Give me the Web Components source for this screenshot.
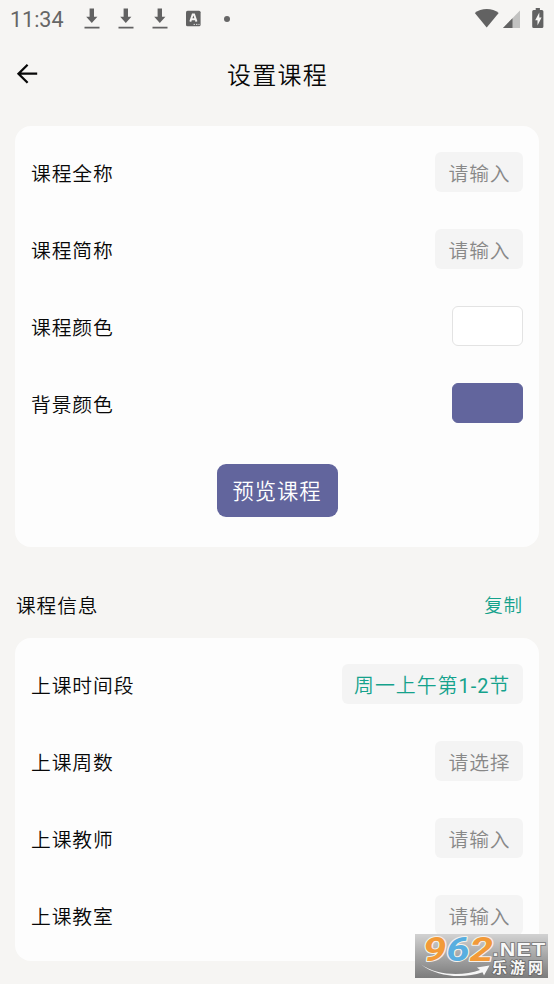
<!DOCTYPE html>
<html lang="zh-CN">
<head>
<meta charset="utf-8">
<title>设置课程</title>
<style>
html,body{margin:0;height:984px;overflow:hidden;background:#f6f5f3}
body{font-family:Roboto,"Noto Sans CJK SC",sans-serif;font-weight:350;color:#080808}
</style>
</head>
<body>
<course-page></course-page>
<script>
const define = (name, html) => {
  const t = document.createElement('template');
  t.innerHTML = html;
  customElements.define(name, class extends HTMLElement {
    constructor() {
      super();
      this.attachShadow({mode: 'open'}).append(t.content.cloneNode(true));
    }
  });
};

define('icon-download', `
<style>:host{display:block;width:16px;height:22px}svg{display:block}</style>
<svg width="16" height="22" viewBox="0 0 16 22" fill="#626262"><path d="M5.600 1.500h4.400v8.200h3.400L7.800 16 2.200 9.700h3.400zM.5 19.800h15v1.700H.5z"/></svg>`);

define('status-bar', `
<style>
:host{display:flex;height:38px;box-sizing:border-box;padding:0 9px 0 10px;color:#666;align-items:flex-start}
.time{font:400 21.500px/38px Roboto,sans-serif;width:74px;white-space:nowrap;margin-top:1px}
.left{display:flex;gap:18px;padding-top:7px}
.kb{margin:10px 0 0 18px;display:block}
.dot{width:6px;height:6px;border-radius:50%;background:#666;margin:15.5px 0 0 23px}
.right{display:flex;margin-left:auto}
svg{display:block}
</style>
<span class="time">11:34</span>
<div class="left"><icon-download></icon-download><icon-download></icon-download><icon-download></icon-download></div>
<svg class="kb" width="15" height="17" viewBox="0 0 15 17"><rect x="0" y=".7" width="14.6" height="15.6" rx="1.6" fill="#626262"/><path d="M4.300 11.600 6.700 4.400h1.400l2.400 7.200M5.200 9.300h4.500" fill="none" stroke="#f6f5f3" stroke-width="1.900"/><path d="M7.600 14.400h1.400m1 0h1.400m1 0h1.200" stroke="#ddd" stroke-width="1"/></svg>
<div class="dot"></div>
<div class="right">
<svg width="75" height="38" viewBox="470 0 75 38"><path d="M474.800 13.100C481 7.500 492.500 7.500 498.700 13.100L486.700 27.500z" fill="#626262"/><path d="M520 10.500V28h-17z" fill="#c2c2c1"/><path d="M512.500 18.200V28h-9.500z" fill="#626262"/><path d="M535.700 8h4.200v1.900h2q1.500 0 1.500 1.500v15q0 1.500-1.500 1.500h-8.200q-1.500 0-1.500-1.500v-15q0-1.500 1.500-1.500h2z" fill="#626262"/><path d="M539.300 12.500l-4.100 7.700h2.300v5.300l4.100-7.900h-2.300z" fill="#f6f5f3"/></svg>
</div>`);

define('title-bar', `
<style>
:host{display:grid;grid-template-columns:40px 1fr 40px;height:72px;padding:0 8px;align-items:center}
h1{margin:0;padding:2px 0 0 1px;box-sizing:border-box;height:72px;text-align:center;font-weight:inherit;font-size:24px;line-height:72px;letter-spacing:1.200px}
svg{display:block}
</style>
<svg width="40" height="72" viewBox="8 38 40 72"><path d="M37.200 73.700H18.800M27.600 64.800 18.500 73.700 27.600 82.800" fill="none" stroke="#080808" stroke-width="2.300"/></svg>
<h1><slot></slot></h1>`);

define('form-card', `
<style>
:host{display:flex;flex-direction:column;gap:37px;box-sizing:border-box;margin:0 15px;padding:26px 16px;background:#fdfdfd;border-radius:16px}
</style><slot></slot>`);

define('form-row', `
<style>
:host{display:flex;justify-content:space-between;align-items:flex-start;height:40px;font-size:19.800px;letter-spacing:.9px;line-height:45px;white-space:nowrap}
</style><slot name="label"></slot><slot></slot>`);

define('field-box', `
<style>
:host{display:block;box-sizing:border-box;height:40px;min-width:88px;line-height:45px;padding:0 12px 0 13.500px;background:#f4f4f4;border-radius:6px;color:#888}
:host([filled]){color:#15a28c;padding:0 0 0 12px;width:181px;font-size:19.900px;letter-spacing:1px}
</style><slot></slot>`);

define('color-swatch', `
<style>
:host{display:block;box-sizing:border-box;width:71px;height:40px;border-radius:6px;border:1px solid var(--edge,#e3e3e3);background:var(--fill,#fff)}
</style>`);

define('preview-button', `
<style>
:host{display:flex;justify-content:center;margin-top:4px}
button{all:unset;box-sizing:border-box;width:121px;height:53px;border-radius:9px;background:#62659d;color:#fff;text-align:center;font-size:21.300px;line-height:56px;letter-spacing:.9px;white-space:nowrap}
</style><button><slot></slot></button>`);

define('section-head', `
<style>
:host{display:flex;justify-content:space-between;height:91px;box-sizing:border-box;padding:40px 31px 0 16px;line-height:40px;font-size:19.700px;letter-spacing:.9px}
.act{color:#15a28c;font-size:18.500px;letter-spacing:.9px;line-height:39px}
</style><slot></slot><span class="act"><slot name="action"></slot></span>`);

define('site-mark', `
<style>:host{position:absolute;left:415px;top:934px;width:133px;height:44px}svg{display:block;overflow:visible}</style>
<svg width="133" height="44" viewBox="0 0 133 44">
<defs><linearGradient id="g" x2="0" y2="1"><stop stop-color="#d2d2d2"/><stop offset=".45" stop-color="#aaa"/><stop offset="1" stop-color="#7c7c7c"/></linearGradient></defs>
<rect width="133" height="44" fill="url(#g)"/>
<path d="M6 30.500C23 42 48 42 65 36L62 33.500 74.500 31.500 69 41.500 67.500 38.300C48 45 22 43 6 30.500z" fill="#f6f6f6"/>
<text x="8" y="27" font-family="Roboto,sans-serif" font-weight="700" font-size="33" font-style="italic" stroke="#f4f1ec" stroke-width="2" stroke-linejoin="round" paint-order="stroke" textLength="70" lengthAdjust="spacingAndGlyphs" fill="#f29a38">9<tspan fill="#58aee0">6</tspan>2</text>
<text x="77.500" y="21.500" font-family="Liberation Sans,sans-serif" font-weight="700" font-size="18" letter-spacing="1" textLength="54" lengthAdjust="spacingAndGlyphs" fill="#f8f8f8" stroke="#777" stroke-width="1.600" paint-order="stroke">.NET</text>
<text x="77" y="39" font-family="Noto Sans CJK SC,sans-serif" font-size="15" font-weight="700" textLength="51" fill="#f8f8f8" stroke="#686868" stroke-width="1.600" paint-order="stroke">乐游网</text>
</svg>`);

define('course-page', `
<style>
:host{display:block;width:554px;height:984px;position:relative;overflow:hidden;background:#f6f5f3}
.first{margin-top:16px;height:421px}
.second{height:323px}
.violet{--fill:#62659d;--edge:#62659d}
.num{font-weight:400}
</style>
<status-bar></status-bar>
<title-bar>设置课程</title-bar>
<form-card class="first">
<form-row><span slot="label">课程全称</span><field-box>请输入</field-box></form-row>
<form-row><span slot="label">课程简称</span><field-box>请输入</field-box></form-row>
<form-row><span slot="label">课程颜色</span><color-swatch></color-swatch></form-row>
<form-row><span slot="label">背景颜色</span><color-swatch class="violet"></color-swatch></form-row>
<preview-button>预览课程</preview-button>
</form-card>
<section-head><span>课程信息</span><span slot="action">复制</span></section-head>
<form-card class="second">
<form-row><span slot="label">上课时间段</span><field-box filled>周一上午第<span class="num">1-2</span>节</field-box></form-row>
<form-row><span slot="label">上课周数</span><field-box>请选择</field-box></form-row>
<form-row><span slot="label">上课教师</span><field-box>请输入</field-box></form-row>
<form-row><span slot="label">上课教室</span><field-box>请输入</field-box></form-row>
</form-card>
<site-mark></site-mark>`);
</script>
</body>
</html>
